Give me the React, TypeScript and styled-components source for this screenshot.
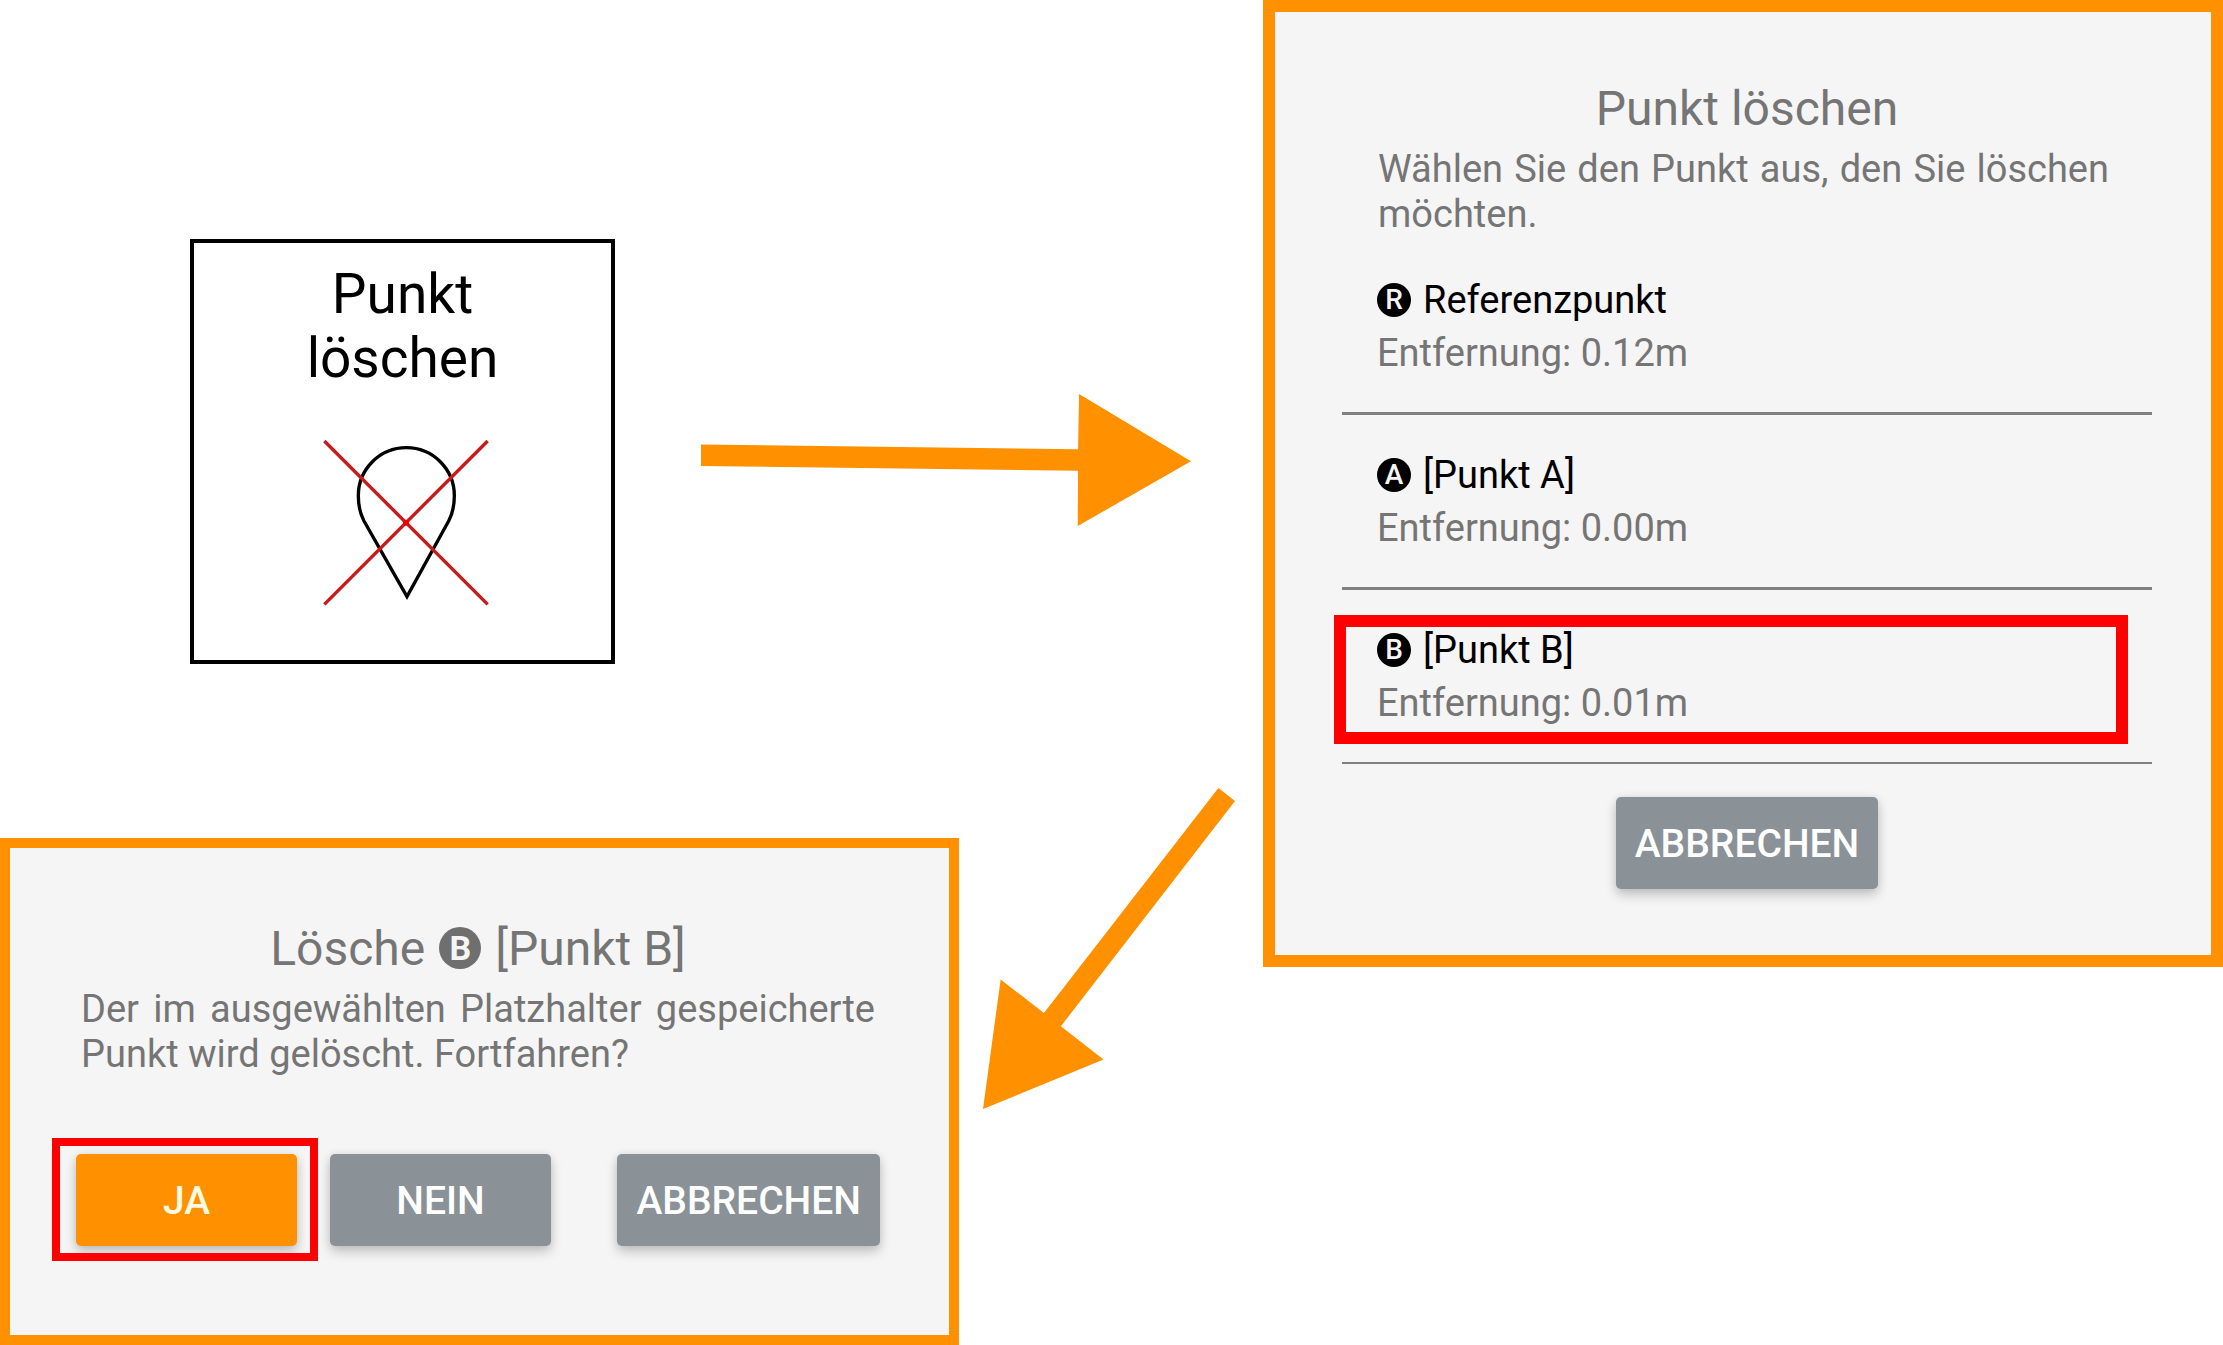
import React from "react";
import styled, { createGlobalStyle } from "styled-components";

const ORANGE = "#ff9100";
const RED = "#ff0000";

const GlobalStyle = createGlobalStyle`
  *, *::before, *::after { box-sizing: border-box; }
  body {
    margin: 0;
    background: #ffffff;
    font-family: Roboto, "Liberation Sans", sans-serif;
  }
`;

const Page = styled.main`
  display: grid;
  grid-template-columns: minmax(0, 1263fr) minmax(0, 960fr);
  align-items: start;
`;

const Steps = styled.div`
  display: flex;
  flex-direction: column;
  gap: 124px;
`;

const StartStep = styled.section`
  display: flex;
  align-items: flex-start;
  gap: 86px;
  padding: 239px 72px 0 190px;
`;

const ConfirmStep = styled.section`
  display: flex;
  align-items: flex-start;
  gap: 24px;
  padding-right: 28px;
`;

const Tile = styled.button`
  display: flex;
  flex-direction: column;
  align-items: center;
  flex: none;
  width: 425px;
  height: 425px;
  padding: 19px 0 0;
  border: 4px solid #000000;
  background: #ffffff;
  color: #000000;
  font: 400 55px/64px Roboto, "Liberation Sans", sans-serif;
`;

const TileLabel = styled.span`
  width: 240px;
  margin-bottom: 51px;
`;

const PinDrawing = styled.svg`
  display: block;
  width: 172px;
  height: 164px;
  overflow: visible;
`;

const ArrowRight = styled.svg`
  flex: none;
  width: 490px;
  height: 132px;
  margin-top: 155px;
  fill: ${ORANGE};
`;

const ArrowDown = styled.svg`
  flex: none;
  width: 252px;
  height: 321px;
  fill: ${ORANGE};
`;

const SelectDialog = styled.section`
  display: flex;
  flex-direction: column;
  padding: 69px 59px 66px 67px;
  border: 12px solid ${ORANGE};
  background: #f5f5f5;
  color: #757575;
`;

const ConfirmDialog = styled.section`
  flex: 1;
  min-width: 0;
  margin-top: 50px;
  padding: 73px 69px 89px 66px;
  border: 10px solid ${ORANGE};
  background: #f5f5f5;
  color: #757575;
`;

const Title = styled.h2`
  display: flex;
  align-items: center;
  justify-content: center;
  gap: 14px;
  margin: 0 0 10px;
  font-size: 48px;
  line-height: 56px;
  font-weight: 400;
`;

const Message = styled.p<{ $inset: string }>`
  margin: 0;
  padding: ${(p) => p.$inset};
  font-size: 38px;
  line-height: 45px;
  text-align: justify;
`;

const PointList = styled.ul`
  margin: 3px 0 33px;
  padding: 0;
  list-style: none;
`;

const PointItem = styled.li`
  position: relative;
  border-bottom: 3px solid #808080;

  &:last-child {
    border-bottom-width: 2px;
  }
`;

const PointButton = styled.button`
  display: block;
  width: 100%;
  padding: 34px 35px 32px;
  border: 0;
  background: none;
  color: #757575;
  font: 400 38px/53px Roboto, "Liberation Sans", sans-serif;
  text-align: left;
`;

const PointName = styled.span`
  display: flex;
  align-items: center;
  gap: 12px;
  color: #000000;
`;

const PointDistance = styled.span`
  display: block;
`;

const Badge = styled.span<{ $large?: boolean }>`
  display: inline-flex;
  align-items: center;
  justify-content: center;
  flex: none;
  width: ${(p) => (p.$large ? 42 : 34)}px;
  height: ${(p) => (p.$large ? 42 : 34)}px;
  margin-bottom: 2px;
  border-radius: 50%;
  background: ${(p) => (p.$large ? "#6f6f6f" : "#000000")};
  color: #f5f5f5;
  font-size: ${(p) => (p.$large ? 34 : 28)}px;
  line-height: 1;
  font-weight: ${(p) => (p.$large ? 700 : 500)};
`;

const Marker = styled.span<{ $inset: string; $weight: number }>`
  position: absolute;
  inset: ${(p) => p.$inset};
  border: ${(p) => p.$weight}px solid ${RED};
  pointer-events: none;
`;

const Actions = styled.div`
  display: flex;
  justify-content: space-between;
  margin-top: 77px;
`;

const Choices = styled.div`
  display: flex;
  gap: 33px;
`;

const MarkedAction = styled.div`
  position: relative;
`;

const ActionButton = styled.button<{ $primary?: boolean }>`
  align-self: center;
  min-width: 221px;
  height: 92px;
  padding: 3px 19px 0;
  border: 0;
  border-radius: 5px;
  background: ${(p) => (p.$primary ? ORANGE : "#8a9197")};
  box-shadow: 0 6px 12px rgba(0, 0, 0, 0.2), 0 0 8px rgba(0, 0, 0, 0.08);
  color: ${(p) => (p.$primary ? "#fffbe0" : "#ffffff")};
  font: 500 39px/45px Roboto, "Liberation Sans", sans-serif;
  text-transform: uppercase;
`;

const points = [
  { letter: "R", name: "Referenzpunkt", distance: "0.12m" },
  { letter: "A", name: "[Punkt A]", distance: "0.00m" },
  { letter: "B", name: "[Punkt B]", distance: "0.01m", marked: true },
];

export default function App() {
  return (
    <Page>
      <GlobalStyle />
      <Steps>
        <StartStep>
          <Tile type="button">
            <TileLabel>Punkt löschen</TileLabel>
            <PinDrawing viewBox="0 0 516 492" aria-hidden="true">
              <path
                d="M270 467 L141 240 C127 214 124 190 124 164 A144 144 0 0 1 412 164 C412 190 409 214 395 240 Z"
                fill="none"
                stroke="#000000"
                strokeWidth="10"
              />
              <path d="M22 0 L512 490 M512 0 L22 490" stroke="#c81a1a" strokeWidth="10" />
              <circle cx="267" cy="245" r="9" fill="#f00000" />
            </PinDrawing>
          </Tile>
          <ArrowRight viewBox="0 0 1449 392" preserveAspectRatio="none" aria-hidden="true">
            <polygon points="0,150 1115,164 1118,0 1449,200 1114,392 1115,228 0,214" />
          </ArrowRight>
        </StartStep>

        <ConfirmStep>
          <ConfirmDialog>
            <Title>
              <span>Lösche</span>
              <Badge $large>B</Badge>
              <span>[Punkt B]</span>
            </Title>
            <Message $inset="0 5px">
              Der im ausgewählten Platzhalter gespeicherte Punkt wird gelöscht. Fortfahren?
            </Message>
            <Actions>
              <Choices>
                <MarkedAction>
                  <ActionButton type="button" $primary>Ja</ActionButton>
                  <Marker $inset="-16px -21px -15px -24px" $weight={8} />
                </MarkedAction>
                <ActionButton type="button">Nein</ActionButton>
              </Choices>
              <ActionButton type="button">Abbrechen</ActionButton>
            </Actions>
          </ConfirmDialog>
          <ArrowDown viewBox="0 0 757 962" preserveAspectRatio="none" aria-hidden="true">
            <polygon points="707,0 757,39 234,714 362,814 0,962 53,574 183,674" />
          </ArrowDown>
        </ConfirmStep>
      </Steps>

      <SelectDialog>
        <Title>Punkt löschen</Title>
        <Message $inset="0 43px 0 36px">
          Wählen Sie den Punkt aus, den Sie löschen möchten.
        </Message>
        <PointList>
          {points.map((point) => (
            <PointItem key={point.letter}>
              <PointButton type="button">
                <PointName>
                  <Badge>{point.letter}</Badge>
                  {point.name}
                </PointName>
                <PointDistance>Entfernung: {point.distance}</PointDistance>
              </PointButton>
              {point.marked && <Marker $inset="25px 24px 18px -8px" $weight={12} />}
            </PointItem>
          ))}
        </PointList>
        <ActionButton type="button">Abbrechen</ActionButton>
      </SelectDialog>
    </Page>
  );
}
